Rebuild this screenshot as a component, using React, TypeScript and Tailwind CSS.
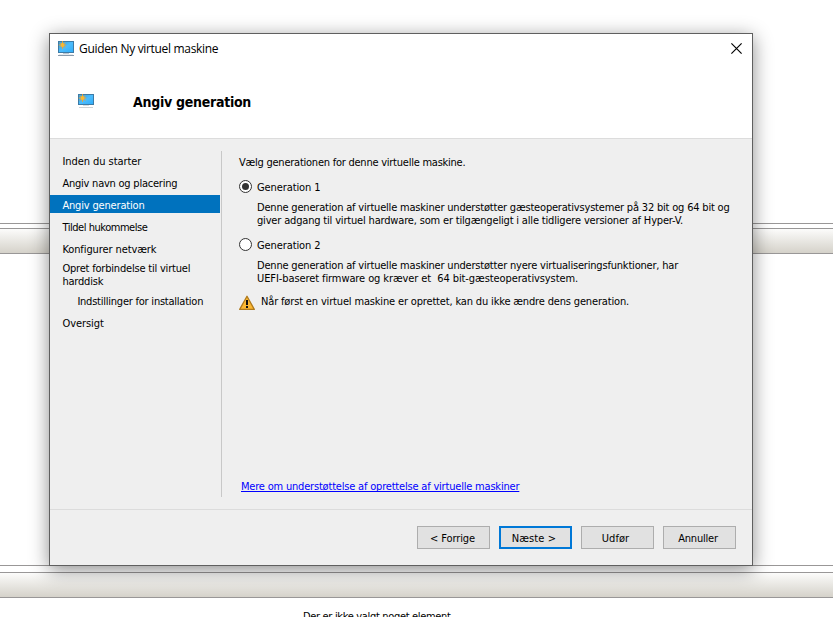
import type { ReactNode } from "react";

function MonitorIcon({ small = false }: { small?: boolean }) {
  const h = small ? 11 : 12;
  return (
    <svg width="16" height="16" viewBox="0 0 16 16" className="block shrink-0">
      <defs>
        <linearGradient id="screen" x1="0" y1="0" x2="1" y2="1">
          <stop offset="0" stopColor="#2f9fe6" />
          <stop offset="0.5" stopColor="#4dbcfc" />
          <stop offset="1" stopColor="#30aefa" />
        </linearGradient>
      </defs>
      <rect x="0" y="0" width="16" height={h} fill="#3d7ba6" />
      <rect x="1" y="1" width="14" height={h - 2} fill="url(#screen)" />
      <path d="M4.5 .2v7.6M.8 4h7.4M1.9 1.4l5.2 5.2M7.1 1.4L1.9 6.6" stroke="#f3a52c" strokeWidth="1" />
      <circle cx="4.5" cy="4" r="1.9" fill="#fbb731" />
      <rect x="5" y={h} width="6" height="1" fill={small ? "#d5dbe0" : "#b9c6d2"} />
      {!small && <rect x="1" y="13" width="14" height="1" fill="#e6ebef" />}
      <rect x={small ? 1 : 0} y={small ? 13 : 14} width={small ? 14 : 16} height="1" fill={small ? "#cfd3d6" : "#8a9bac"} />
    </svg>
  );
}

function WarningIcon() {
  return (
    <svg width="16" height="16" viewBox="0 0 16 16" className="block shrink-0">
      <path d="M8 1.2 15.3 14.4H.7Z" fill="#fcb833" stroke="#b07a1c" strokeWidth="1.3" strokeLinejoin="round" />
      <path d="M7 5h2v5H7zM7 11h2v2H7z" fill="#111" />
    </svg>
  );
}

function Radio({ checked = false }: { checked?: boolean }) {
  return (
    <span className="flex h-[13px] w-[13px] shrink-0 items-center justify-center rounded-full border border-[#333] bg-white">
      {checked && <span className="h-[7px] w-[7px] rounded-full bg-[#333]" />}
    </span>
  );
}

function Step({ children, active = false, className = "" }: { children: ReactNode; active?: boolean; className?: string }) {
  return (
    <li className={`h-[18px] pt-1 pl-[12.4px] ${active ? "mr-px bg-[#0072be] text-white" : ""} ${className}`}>{children}</li>
  );
}

function Button({ children, primary = false, className = "" }: { children: ReactNode; primary?: boolean; className?: string }) {
  return (
    <button
      className={`flex h-[23px] w-[73px] items-center justify-center bg-[#e1e1e1] pt-px ${primary ? "border-2 border-[#0078d7]" : "border border-[#adadad]"} ${className}`}
    >
      {children}
    </button>
  );
}

const band = "h-[26px] shrink-0 border-y border-[#999797] bg-linear-to-b from-[#fcfcfb] to-[#d5d2ca]";

export default function App() {
  return (
    <div className="relative flex h-[617px] w-[833px] flex-col overflow-hidden bg-white font-['DejaVu_Sans_Condensed','DejaVu_Sans',sans-serif] text-[11px] leading-[13px] whitespace-pre text-black">
      <div className="h-[228px] shrink-0 pt-[223px]">
        <div className="h-px bg-[#999797]" />
      </div>
      <div className={band} />
      <div className="h-[318px] shrink-0 pt-[311px]">
        <div className="h-px bg-[#999797]" />
      </div>
      <div className={band} />
      <p className="shrink-0 pt-3 pl-[303px] tracking-[-0.33px]">Der er ikke valgt noget element.</p>

      <section className="absolute top-[33px] left-[49px] flex h-[533px] w-[704px] flex-col border border-[#5f5f5f] bg-[#efefef] shadow-[0_4px_18px_rgba(0,0,0,0.45)]">
        <header className="h-[105px] shrink-0 border-b border-[#dcdcdc] bg-white">
          <div className="flex items-start justify-between pt-[7px] pr-[10px] pl-2">
            <div className="flex gap-[5px]">
              <MonitorIcon />
              <h1 className="font-['Open_Sans',sans-serif] text-[12px] leading-4 tracking-[-0.32px]">Guiden Ny virtuel maskine</h1>
            </div>
            <svg width="11" height="11" viewBox="0 0 11 11" className="mt-[2px] block">
              <path d="M.4.4l10.2 10.2M10.6.4L.4 10.6" stroke="#000" strokeWidth="1.15" />
            </svg>
          </div>
          <div className="flex gap-[39px] pt-[37px] pl-7">
            <MonitorIcon small />
            <h2 className="text-[14px] leading-4 font-bold tracking-[-0.27px]">Angiv generation</h2>
          </div>
        </header>

        <div className="flex min-h-0 flex-1">
          <nav className="mt-3 mb-3 w-[172px] shrink-0 border-r border-[#c8c8c8]">
            <ul className="flex flex-col gap-1">
              <Step className="tracking-[-0.06px]">Inden du starter</Step>
              <Step className="tracking-[-0.23px]">Angiv navn og placering</Step>
              <Step active className="tracking-[-0.17px]">Angiv generation</Step>
              <Step className="tracking-[-0.46px]">Tildel hukommelse</Step>
              <Step className="tracking-[-0.1px]">Konfigurer netværk</Step>
              <li className="h-[26px] pt-px pl-[12.4px] tracking-[-0.2px]">{"Opret forbindelse til virtuel\nharddisk"}</li>
              <Step className="ml-[15px] tracking-[-0.23px]">Indstillinger for installation</Step>
              <Step className="tracking-[-0.05px]">Oversigt</Step>
            </ul>
          </nav>
          <main className="flex flex-1 flex-col pt-[17px] pl-[17px]">
            <p className="tracking-[-0.24px]">Vælg generationen for denne virtuelle maskine.</p>
            <label className="mt-[11px] flex h-[14px] gap-[5px]">
              <Radio checked />
              <span className="pt-px tracking-[-0.1px]">Generation 1</span>
            </label>
            <div className="mt-[7px] pl-[18px]">
              <p className="tracking-[-0.192px]">Denne generation af virtuelle maskiner understøtter gæsteoperativsystemer på 32 bit og 64 bit og</p>
              <p className="tracking-[-0.174px]">giver adgang til virtuel hardware, som er tilgængeligt i alle tidligere versioner af Hyper-V.</p>
            </div>
            <label className="mt-[11px] flex h-[14px] gap-[5px]">
              <Radio />
              <span className="pt-px tracking-[-0.1px]">Generation 2</span>
            </label>
            <div className="mt-[7px] pl-[18px]">
              <p className="tracking-[-0.19px]">Denne generation af virtuelle maskiner understøtter nyere virtualiseringsfunktioner, har</p>
              <p className="tracking-[-0.092px]">UEFI-baseret firmware og kræver et  64 bit-gæsteoperativsystem.</p>
            </div>
            <div className="mt-[10px] flex gap-[6px]">
              <WarningIcon />
              <p className="tracking-[-0.16px]">Når først en virtuel maskine er oprettet, kan du ikke ændre dens generation.</p>
            </div>
            <a className="mt-auto mb-4 ml-[2px] self-start tracking-[-0.195px] text-[#0000ff] underline decoration-1 underline-offset-1 [text-decoration-skip-ink:none]">
              Mere om understøttelse af oprettelse af virtuelle maskiner
            </a>
          </main>
        </div>

        <footer className="flex h-14 shrink-0 justify-end gap-[9px] border-t border-[#dcdcdc] pt-4 pr-4">
          <Button className="pr-0.5 tracking-[-0.1px]">{"< Forrige"}</Button>
          <Button primary className="pr-[3px] tracking-[0.1px]">{"Næste >"}</Button>
          <Button className="pr-1 tracking-[0.05px]">Udfør</Button>
          <Button className="pr-[3px] tracking-[-0.2px]">Annuller</Button>
        </footer>
      </section>
    </div>
  );
}
